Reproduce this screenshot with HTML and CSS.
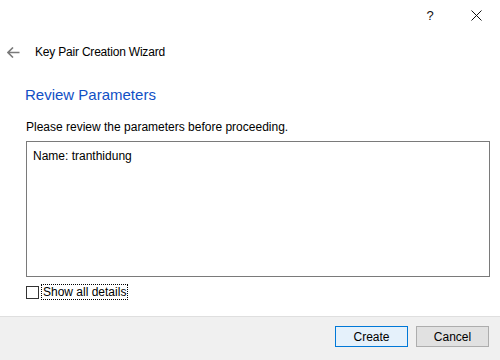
FILE: index.html
```html
<!DOCTYPE html>
<html lang="en">
<head>
    <meta charset="UTF-8">
    <title>Key Pair Creation Wizard</title>
    <link rel="stylesheet" href="styles.css">
</head>
<body>
    <div class="titlebar">
        <span class="tb-btn tb-help">?</span>
        <span class="tb-btn tb-close">
            <svg width="11" height="11" viewBox="0 0 11 11">
                <path d="M0.5 0.5 L10.5 10.5 M10.5 0.5 L0.5 10.5" stroke="#111" stroke-width="1" fill="none"/>
            </svg>
        </span>
    </div>

    <div class="header">
        <span class="back">
            <svg width="13" height="11" viewBox="0 0 13 11">
                <path d="M6 0.5 L1 5.5 L6 10.5 M1 5.5 L12.5 5.5" stroke="#7a7a7a" stroke-width="1.6" fill="none"/>
            </svg>
        </span>
        <span class="wizard-title">Key Pair Creation Wizard</span>
    </div>

    <div class="content">
        <h2 class="instruction">Review Parameters</h2>
        <p class="desc">Please review the parameters before proceeding.</p>
        <div class="param-box">Name: tranthidung</div>
        <label class="check-row">
            <span class="checkbox"></span>
            <span class="check-label">Show all details</span>
        </label>
    </div>

    <div class="footer">
        <button class="btn btn-default">Create</button>
        <button class="btn">Cancel</button>
    </div>
</body>
</html>
```

FILE: styles.css
```css
/* Dialog base */
body {
    font-family: 'Segoe UI', 'Liberation Sans', Arial, sans-serif;
    font-size: 12px;
    margin: 0;
    padding: 0;
    width: 500px;
    height: 360px;
    background-color: #fff;
    color: #000;
    display: flex;
    flex-direction: column;
    overflow: hidden;
}

.titlebar {
    height: 30px;
    display: flex;
    justify-content: flex-end;
    align-items: center;
}

.tb-btn {
    width: 44px;
    height: 30px;
    display: flex;
    justify-content: center;
    align-items: center;
}

.tb-help {
    font-size: 13px;
    color: #111;
    margin-right: 2px;
}

.tb-close {
    margin-right: 2px;
}

.header {
    display: flex;
    align-items: center;
    height: 20px;
    margin-top: 12px;
}

.back {
    display: flex;
    margin-left: 7px;
    width: 28px;
}

.wizard-title {
    font-size: 12px;
    letter-spacing: -0.2px;
    color: #000;
}

.content {
    padding: 0 10px 0 26px;
}

.instruction {
    font-size: 15px;
    font-weight: normal;
    color: #1150c5;
    margin: 22px 0 0 -1px;
    line-height: 21px;
}

.desc {
    margin: 14px 0 0;
    line-height: 16px;
}

.param-box {
    margin-top: 6px;
    height: 122px;
    border: 1px solid #7a7a7a;
    padding: 6px 6px;
    line-height: 16px;
}

.check-row {
    display: flex;
    align-items: center;
    margin-top: 7px;
}

.checkbox {
    width: 11px;
    height: 11px;
    border: 1px solid #333;
    background: #fff;
}

.check-label {
    margin-left: 2px;
    padding: 0 1px;
    line-height: 14px;
    border: 1px dotted #000;
}

.footer {
    margin-top: auto;
    height: 43px;
    background-color: #f0f0f0;
    border-top: 1px solid #dfdfdf;
    display: flex;
    justify-content: flex-end;
    align-items: flex-start;
    padding-right: 11px;
}

.btn {
    font-family: inherit;
    font-size: 12px;
    width: 73px;
    height: 21px;
    margin-top: 9px;
    margin-left: 8px;
    padding: 0;
    background-color: #e1e1e1;
    border: 1px solid #adadad;
    color: #000;
}

.btn-default {
    background-color: #e5f1fb;
    border: 1px solid #0078d7;
}
```
